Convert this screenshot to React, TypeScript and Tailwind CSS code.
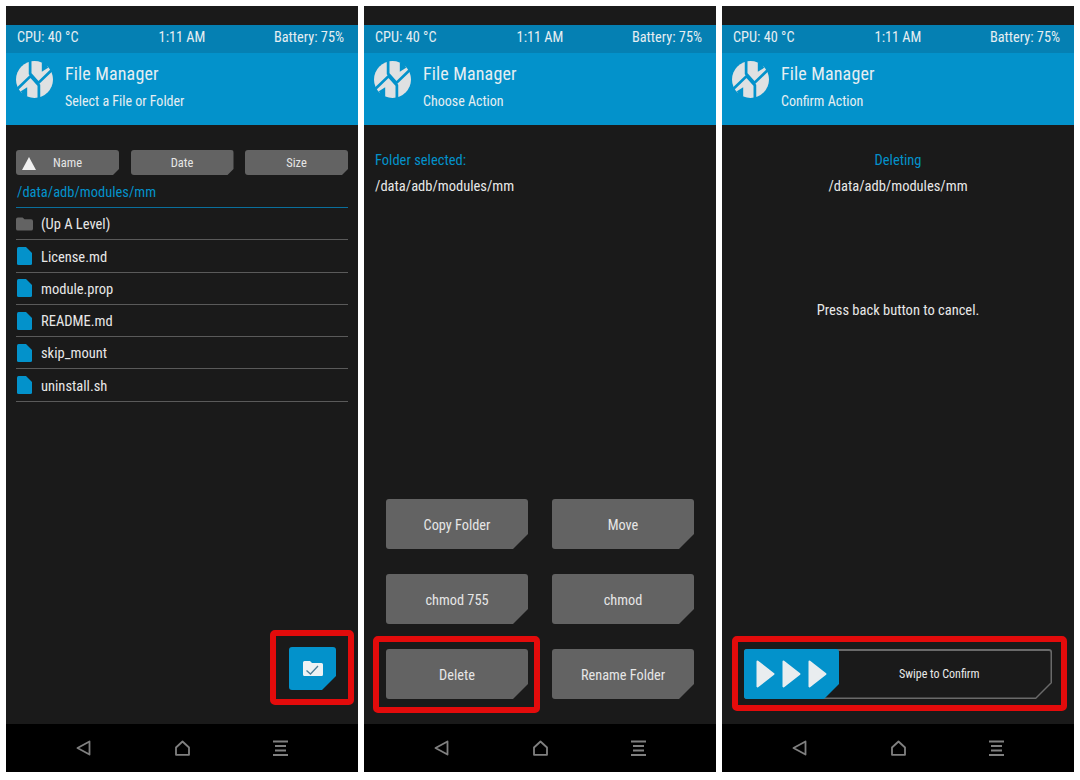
import type { ReactNode } from 'react';

const CUT_SM = '[clip-path:polygon(0_0,100%_0,100%_calc(100%-6px),calc(100%-6px)_100%,0_100%)]';

function TwrpLogo() {
  return (
    <svg width="37" height="37" viewBox="0 0 38 38" className="shrink-0">
      <circle cx="19" cy="19" r="19" fill="#dfe1e2" />
      {[0, 180].map((angle) => (
        <g key={angle} transform={`rotate(${angle} 19 19)`}>
          <path d="M1 29 L15 15.5 L23.5 25 V38" fill="none" stroke="#0392cb" strokeWidth="2.8" />
          <path d="M5 31 L11.5 27 V37 L7 35 Z" fill="#0392cb" />
        </g>
      ))}
    </svg>
  );
}

function NavBar() {
  return (
    <div className="h-12 shrink-0 bg-black flex items-center justify-between px-[70px]">
      <svg width="15" height="16" viewBox="0 0 15 16" fill="none" stroke="#808080" strokeWidth="1.8" strokeLinejoin="round">
        <path d="M13.5 1.5 L1.5 8 L13.5 14.5 Z" />
      </svg>
      <svg width="15" height="16" viewBox="0 0 15 16" fill="none" stroke="#808080" strokeWidth="1.8" strokeLinejoin="round">
        <path d="M7.5 1.5 L14 7.5 V14.8 H1 V7.5 Z" />
      </svg>
      <svg width="15" height="16" viewBox="0 0 15 16" fill="none" stroke="#808080" strokeWidth="1.8">
        <path d="M0 1.5 H15 M2 6 H13 M2 10.5 H13 M0 15 H15" />
      </svg>
    </div>
  );
}

function Phone({ subtitle, children }: { subtitle: string; children: ReactNode }) {
  return (
    <div className="relative w-[352px] h-[766px] bg-[#1a1a1a] flex flex-col overflow-hidden">
      <div className="h-[19px] shrink-0" />
      <div className="h-[28px] shrink-0 bg-[#0580b3] grid grid-cols-3 items-center px-[11px] pb-[3px] text-[#e6eef2] text-[14.3px]">
        <span>CPU: 40 °C</span>
        <span className="text-center">1:11 AM</span>
        <span className="text-right pr-[3px]">Battery: 75%</span>
      </div>
      <div className="h-[72px] shrink-0 bg-[#0392cb] flex items-start pl-[10px] pt-[8px] gap-[12px] text-[#e6eef2]">
        <TwrpLogo />
        <div className="-mt-px">
          <div className="text-[18px] leading-[27px] tracking-[0.15px]">File Manager</div>
          <div className="text-[14px] leading-[20px] mt-[4px]">{subtitle}</div>
        </div>
      </div>
      <div className="flex-1 min-h-0 relative">{children}</div>
      <NavBar />
    </div>
  );
}

function SortButton({ label, arrow }: { label: string; arrow?: boolean }) {
  return (
    <div className={`relative h-[25px] flex-1 bg-[#636363] rounded-[3px] ${CUT_SM} flex items-center justify-center pt-[2px] text-[12.5px] text-[#e6e6e6]`}>
      {arrow && (
        <svg width="14" height="13" viewBox="0 0 14 13" className="absolute left-[6px] top-[7px]">
          <path d="M7 0 L14 13 H0 Z" fill="#f0f0f0" />
        </svg>
      )}
      <span>{label}</span>
    </div>
  );
}

function FileRow({ name, folder }: { name: string; folder?: boolean }) {
  return (
    <div className="h-[32.3px] flex items-center gap-[8px] border-b border-[#5a5a5a] pt-[3px] text-[14.5px] text-[#e8e8e8]">
      <div className="w-[17px] flex justify-center -mt-[3px]">
        {folder ? (
          <svg width="18" height="14" viewBox="0 0 18 14">
            <path d="M0 2 Q0 0 2 0 H7 L9 2 H16 Q18 2 18 4 V12 Q18 14 16 14 H2 Q0 14 0 12 Z" fill="#636363" />
          </svg>
        ) : (
          <svg width="15" height="18" viewBox="0 0 15 18">
            <path d="M0 1.5 Q0 0 1.5 0 H9 L15 6 V16.5 Q15 18 13.5 18 H1.5 Q0 18 0 16.5 Z" fill="#0392cb" />
          </svg>
        )}
      </div>
      <span>{name}</span>
    </div>
  );
}

function ActionButton({ label }: { label: string }) {
  return (
    <div className="w-[142px] h-[50px] bg-[#636363] rounded-[3px] [clip-path:polygon(0_0,100%_0,100%_calc(100%-15px),calc(100%-15px)_100%,0_100%)] flex items-center justify-center pt-[4px] text-[14.3px] text-[#e6e6e6]">
      {label}
    </div>
  );
}

function RedBox({ className }: { className: string }) {
  return <div className={`absolute border-[6px] border-[#e30b0b] rounded-[5px] ${className}`} />;
}

function FileListPanel() {
  return (
    <Phone subtitle="Select a File or Folder">
      <div className="px-[10px] pt-[25px]">
        <div className="flex gap-[11.5px]">
          <SortButton label="Name" arrow />
          <SortButton label="Date" />
          <SortButton label="Size" />
        </div>
        <div className="h-[33px] leading-[36px] pl-px border-b border-[#0a6f9c] text-[14.5px] text-[#0392cb]">
          /data/adb/modules/mm
        </div>
        <FileRow name="(Up A Level)" folder />
        <FileRow name="License.md" />
        <FileRow name="module.prop" />
        <FileRow name="README.md" />
        <FileRow name="skip_mount" />
        <FileRow name="uninstall.sh" />
      </div>
      <div className="absolute left-[283px] top-[522px] w-[47px] h-[43px] bg-[#0392cb] rounded-[3px] [clip-path:polygon(0_0,100%_0,100%_calc(100%-14px),calc(100%-14px)_100%,0_100%)] flex items-center justify-center">
        <svg width="20" height="15" viewBox="0 0 20 15" fill="none">
          <path d="M0 1.5 Q0 0 1.5 0 H7 L9 2 H18.5 Q20 2 20 3.5 V13.5 Q20 15 18.5 15 H1.5 Q0 15 0 13.5 Z" fill="#eef2f4" />
          <path d="M3.5 9.5 L7.5 13 L15 5" stroke="#4d7f99" strokeWidth="1.3" />
        </svg>
      </div>
      <RedBox className="left-[264px] top-[505px] w-[84px] h-[75px]" />
    </Phone>
  );
}

function ActionPanel() {
  return (
    <Phone subtitle="Choose Action">
      <div className="px-[11px] pt-[26px] text-[14.5px]">
        <div className="leading-[20px] text-[#0392cb]">Folder selected:</div>
        <div className="leading-[20px] mt-[6px] text-[#e8e8e8]">/data/adb/modules/mm</div>
      </div>
      <div className="absolute left-[22px] top-[374px] grid grid-cols-[142px_142px] gap-x-[24px] gap-y-[25px]">
        <ActionButton label="Copy Folder" />
        <ActionButton label="Move" />
        <ActionButton label="chmod 755" />
        <ActionButton label="chmod" />
        <ActionButton label="Delete" />
        <ActionButton label="Rename Folder" />
      </div>
      <RedBox className="left-[9px] top-[511px] w-[167px] h-[77px]" />
    </Phone>
  );
}

function ConfirmPanel() {
  return (
    <Phone subtitle="Confirm Action">
      <div className="pt-[26px] text-center text-[14.5px]">
        <div className="leading-[20px] text-[#0392cb]">Deleting</div>
        <div className="leading-[20px] mt-[6px] text-[#e8e8e8]">/data/adb/modules/mm</div>
        <div className="leading-[20px] mt-[104px] text-[#e8e8e8]">Press back button to cancel.</div>
      </div>
      <div className="absolute left-[22px] top-[524px] w-[308px] h-[50px] bg-[#6a6a6a] rounded-[3px] p-[1.5px] [clip-path:polygon(0_0,100%_0,100%_calc(100%-16px),calc(100%-16px)_100%,0_100%)]">
        <div className="w-full h-full bg-[#1a1a1a] rounded-[2px] [clip-path:polygon(0_0,100%_0,100%_calc(100%-15px),calc(100%-15px)_100%,0_100%)] flex items-center justify-end pr-[71px] text-[12px] text-[#e8e8e8]">
          Swipe to Confirm
        </div>
      </div>
      <div className="absolute left-[22px] top-[524px] w-[95px] h-[50px] bg-[#0392cb] rounded-[3px] [clip-path:polygon(0_0,100%_0,100%_calc(100%-15px),calc(100%-15px)_100%,0_100%)] flex items-center pl-[12px] gap-[7px]">
        {[0, 1, 2].map((i) => (
          <svg key={i} width="19" height="28" viewBox="0 0 19 28">
            <path d="M1.5 1.5 L17.5 14 L1.5 26.5 Z" fill="#e9edef" stroke="#e9edef" strokeWidth="2" strokeLinejoin="round" />
          </svg>
        ))}
      </div>
      <RedBox className="left-[10px] top-[511px] w-[335px] h-[75px]" />
    </Phone>
  );
}

export default function App() {
  return (
    <div className="w-[1080px] h-[780px] bg-white pt-[6px] pl-[6px] flex gap-[6px] font-['Roboto',sans-serif] [font-stretch:75%] overflow-hidden">
      <FileListPanel />
      <ActionPanel />
      <ConfirmPanel />
    </div>
  );
}
